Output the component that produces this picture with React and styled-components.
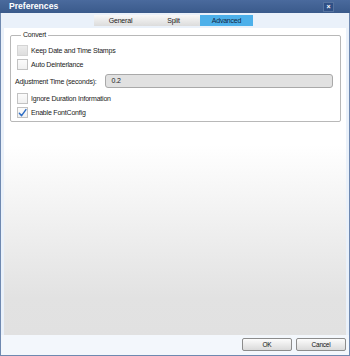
import styled, { createGlobalStyle } from "styled-components";

const Global = createGlobalStyle`
  html, body { margin: 0; padding: 0; background: #fff; }
  body { font-family: "Liberation Sans", Arial, sans-serif; letter-spacing: -0.2px; }
  * { box-sizing: border-box; }
`;

const Window = styled.div`
  width: 350px;
  height: 356px;
  border: 1px solid #6f89b0;
  border-top: none;
  background: #eaf1fa;
  display: flex;
  flex-direction: column;
  position: relative;
`;

const TitleBar = styled.div`
  height: 13px;
  margin: 0 -1px;
  background: linear-gradient(#4a6a9d, #3a5a8b);
  display: flex;
  align-items: center;
  justify-content: space-between;
  padding: 0 16px 0 9px;
`;

const Title = styled.div`
  color: #fff;
  font-weight: bold;
  font-size: 8.6px;
  line-height: 13px;
  letter-spacing: 0;
`;

const CloseBtn = styled.div`
  width: 11px;
  height: 10px;
  margin-top: 1px;
  background: #2f5086;
  border: 1px solid #56739f;
  color: #fff;
  font-size: 7px;
  font-weight: bold;
  line-height: 8px;
  text-align: center;
`;

const TabRow = styled.div`
  height: 15px;
  padding: 2px 0 2px 93px;
  display: flex;
`;

const Tab = styled.div`
  width: 53px;
  height: 11px;
  font-size: 7px;
  line-height: 11px;
  text-align: center;
  color: ${p => (p.active ? "#10263f" : "#1a1a1a")};
  background: ${p =>
    p.active ? "#4db0ea" : "linear-gradient(#f8f8f8, #dcdcdc)"};
`;

const Panel = styled.div`
  flex: 1;
  margin: 0 3px;
  background: linear-gradient(#ffffff 0%, #ffffff 38%, #e2e2e2 88%, #e1e1e1 100%);
  padding: 7px 5px 0 6px;
`;

const GroupBox = styled.div`
  position: relative;
  border: 1px solid #b8b8b8;
  border-radius: 2px;
  padding: 9px 7px 3px 6px;
  display: flex;
  flex-direction: column;
  gap: 3px;
`;

const Legend = styled.span`
  position: absolute;
  top: -6px;
  left: 10px;
  padding: 0 2px;
  background: #fff;
  font-size: 7px;
  line-height: 10px;
  color: #1a1a1a;
`;

const Row = styled.div`
  display: flex;
  align-items: center;
  height: 11px;
  gap: 3px;
  font-size: 7px;
  color: #1a1a1a;
`;

const Box = styled.div`
  width: 11px;
  height: 11px;
  border: 1px solid ${p => (p.disabled ? "#d4d4d4" : "#c2c2c2")};
  background: ${p =>
    p.disabled ? "linear-gradient(#ececec, #dedede)" : "linear-gradient(#fbfbfb, #f0f0f0)"};
  display: flex;
  align-items: center;
  justify-content: center;
`;

const InputRow = styled.div`
  display: flex;
  align-items: center;
  height: 14px;
  margin: 1px 0 2px -2px;
  gap: 8px;
  font-size: 7px;
  color: #1a1a1a;
`;

const Field = styled.div`
  flex: 1;
  height: 14px;
  border: 1px solid #a9a9a9;
  border-radius: 3px;
  background: #e1e1e1;
  padding-left: 6px;
  line-height: 12px;
  font-size: 7px;
  color: #1a1a1a;
`;

const Footer = styled.div`
  height: 20px;
  display: flex;
  justify-content: flex-end;
  gap: 4px;
  padding: 3px 3px 0 0;
  background: #f3f7fc;
`;

const Button = styled.div`
  width: 50px;
  height: 13px;
  border: 1px solid #8c8c8c;
  border-radius: 2px;
  background: linear-gradient(#fcfcfc, #dadada);
  font-size: 6.5px;
  line-height: 11px;
  text-align: center;
  color: #111;
`;

const Check = () => (
  <svg width="10" height="10" viewBox="0 0 10 10">
    <path d="M1.5 5.2 L4 8 L8.8 1.2" fill="none" stroke="#2b6cc4" strokeWidth="1.6" strokeLinecap="round" strokeLinejoin="round" />
  </svg>
);

const CheckRow = ({ label, checked, disabled }) => (
  <Row>
    <Box disabled={disabled}>{checked && <Check />}</Box>
    {label}
  </Row>
);

export default function App() {
  return (
    <>
      <Global />
      <Window>
        <TitleBar>
          <Title>Preferences</Title>
          <CloseBtn>×</CloseBtn>
        </TitleBar>
        <TabRow>
          <Tab>General</Tab>
          <Tab>Split</Tab>
          <Tab active>Advanced</Tab>
        </TabRow>
        <Panel>
          <GroupBox>
            <Legend>Convert</Legend>
            <CheckRow label="Keep Date and Time Stamps" disabled />
            <CheckRow label="Auto Deinterlance" />
            <InputRow>
              Adjustment Time (seconds):
              <Field>0.2</Field>
            </InputRow>
            <CheckRow label="Ignore Duration Information" />
            <CheckRow label="Enable FontConfig" checked />
          </GroupBox>
        </Panel>
        <Footer>
          <Button>OK</Button>
          <Button>Cancel</Button>
        </Footer>
      </Window>
    </>
  );
}
